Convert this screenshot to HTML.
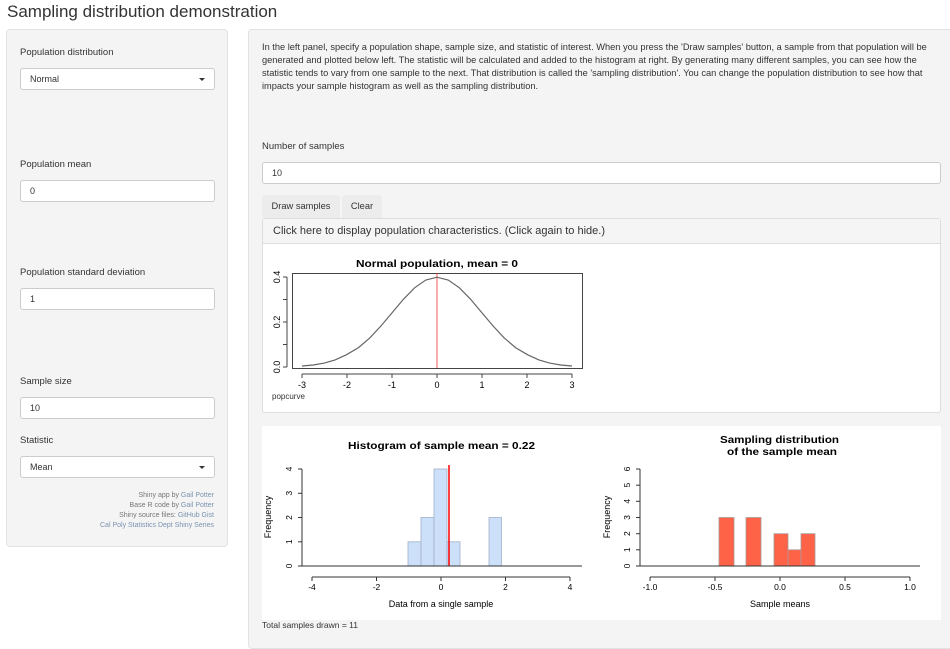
<!DOCTYPE html>
<html><head><meta charset="utf-8"><style>
*{box-sizing:border-box;margin:0;padding:0}
body{width:950px;height:636px;background:#fff;font-family:"Liberation Sans",Arial,sans-serif;color:#333;position:relative;overflow:hidden}
.a{position:absolute;white-space:nowrap}
.lbl{font-size:9.5px;color:#333}
.inp{position:absolute;background:#fff;border:1px solid #ccc;border-radius:3px;font-size:9px;padding-left:9px;line-height:20px;height:22px}
.car{position:absolute;right:9px;top:9px;width:0;height:0;border-left:3.5px solid transparent;border-right:3.5px solid transparent;border-top:3.5px solid #333}
.cred{font-size:7px;color:#777;text-align:right;right:736px;position:absolute}
.cred a{color:#7a93b0}
</style></head><body>
<div class="a" style="left:7px;top:2px;font-size:17px;color:#333">Sampling distribution demonstration</div>

<div class="a" style="left:6px;top:29px;width:222px;height:518px;background:#f4f4f4;border:1px solid #e3e3e3;border-radius:4px"></div>
<div class="a lbl" style="left:20px;top:47px">Population distribution</div>
<div class="inp" style="left:20px;top:68px;width:195px">Normal<div class="car"></div></div>
<div class="a lbl" style="left:20px;top:159px">Population mean</div>
<div class="inp" style="left:20px;top:180px;width:195px">0</div>
<div class="a lbl" style="left:20px;top:267px">Population standard deviation</div>
<div class="inp" style="left:20px;top:288px;width:195px">1</div>
<div class="a lbl" style="left:20px;top:376px">Sample size</div>
<div class="inp" style="left:20px;top:397px;width:195px">10</div>
<div class="a lbl" style="left:20px;top:435px">Statistic</div>
<div class="inp" style="left:20px;top:456px;width:195px">Mean<div class="car"></div></div>
<div class="cred" style="top:492px">Shiny app by <a>Gail Potter</a></div>
<div class="cred" style="top:502px">Base R code by <a>Gail Potter</a></div>
<div class="cred" style="top:512px">Shiny source files: <a>GitHub Gist</a></div>
<div class="cred" style="top:522px"><a>Cal Poly Statistics Dept Shiny Series</a></div>

<div class="a" style="left:248px;top:29px;width:710px;height:620px;background:#f4f4f4;border:1px solid #e3e3e3;border-radius:4px"></div>
<div class="a" style="left:262px;top:41px;font-size:9.25px;line-height:13px;color:#333">In the left panel, specify a population shape, sample size, and statistic of interest. When you press the 'Draw samples' button, a sample from that population will be<br>generated and plotted below left. The statistic will be calculated and added to the histogram at right. By generating many different samples, you can see how the<br>statistic tends to vary from one sample to the next. That distribution is called the 'sampling distribution'. You can change the population distribution to see how that<br>impacts your sample histogram as well as the sampling distribution.</div>
<div class="a lbl" style="left:262px;top:141px">Number of samples</div>
<div class="inp" style="left:262px;top:162px;width:679px">10</div>
<div class="a" style="left:262px;top:195px;width:78px;height:23px;background:#ececec;border-radius:3px 3px 0 0;font-size:9.3px;text-align:center;line-height:22px">Draw samples</div>
<div class="a" style="left:342px;top:195px;width:40px;height:23px;background:#ececec;border-radius:3px 3px 0 0;font-size:9.3px;text-align:center;line-height:22px">Clear</div>
<div class="a" style="left:262px;top:218px;width:679px;height:195px;background:#fff;border:1px solid #ddd;border-radius:3px"></div>
<div class="a" style="left:263px;top:219px;width:677px;height:25px;background:#f5f5f5;border-bottom:1px solid #ddd;font-size:11px;line-height:24px;padding-left:10px">Click here to display population characteristics. (Click again to hide.)</div>
<div class="a" style="left:262px;top:426px;width:679px;height:194px;background:#fff"></div>
<div class="a" style="left:262px;top:620px;font-size:8.5px;color:#333">Total samples drawn = 11</div>

<svg class="a" style="left:0;top:0" width="950" height="636" font-family="Liberation Sans,sans-serif">
<text x="356" y="267" font-size="10" font-weight="bold" fill="#000" textLength="162" lengthAdjust="spacingAndGlyphs">Normal population, mean = 0</text>
<rect x="292.5" y="273.5" width="290" height="95" fill="none" stroke="#444" stroke-width="1"/>
<line x1="437" y1="273" x2="437" y2="368" stroke="#e33" stroke-width="0.8"/>
<polyline fill="none" stroke="#666" stroke-width="1.2" points="302,366 313.2,365 324.4,363.1 335.1,359.9 346.3,354.8 358.5,347.6 369.8,337.9 381,325.9 392.2,312.6 403.4,299.3 414.6,287.8 425.8,280 437,277.2 448.2,280 459.4,287.8 470.6,299.3 481.8,312.6 493,325.9 504.2,337.9 515.5,347.6 527.7,354.8 538.9,359.9 549.6,363.1 560.8,365 572,366"/>
<g stroke="#444"><line x1="302" y1="374" x2="572" y2="374"/>
<line x1="302" y1="374" x2="302" y2="378"/><line x1="347" y1="374" x2="347" y2="378"/><line x1="392" y1="374" x2="392" y2="378"/><line x1="437" y1="374" x2="437" y2="378"/><line x1="482" y1="374" x2="482" y2="378"/><line x1="527" y1="374" x2="527" y2="378"/><line x1="572" y1="374" x2="572" y2="378"/>
<line x1="287" y1="277" x2="287" y2="367"/><line x1="283" y1="277" x2="287" y2="277"/><line x1="283" y1="299.5" x2="287" y2="299.5"/><line x1="283" y1="322" x2="287" y2="322"/><line x1="283" y1="344.5" x2="287" y2="344.5"/><line x1="283" y1="367" x2="287" y2="367"/></g>
<g font-size="9" text-anchor="middle" fill="#000"><text x="302" y="388">-3</text><text x="347" y="388">-2</text><text x="392" y="388">-1</text><text x="437" y="388">0</text><text x="482" y="388">1</text><text x="527" y="388">2</text><text x="572" y="388">3</text>
<text transform="translate(280,367) rotate(-90)">0.0</text><text transform="translate(280,322) rotate(-90)">0.2</text><text transform="translate(280,277) rotate(-90)">0.4</text></g>
<text x="272" y="399" font-size="8" fill="#333">popcurve</text>

<text x="348" y="449" font-size="10" font-weight="bold" fill="#000" textLength="187" lengthAdjust="spacingAndGlyphs">Histogram of sample mean = 0.22</text>
<g fill="#cce0fa" stroke="#9fb0c8" stroke-width="0.8">
<rect x="408" y="541.8" width="13" height="24.2"/><rect x="421" y="517.5" width="13" height="48.5"/><rect x="434" y="469" width="13" height="97"/><rect x="447" y="541.8" width="13" height="24.2"/><rect x="489" y="517.5" width="12.5" height="48.5"/></g>
<line x1="449" y1="465" x2="449" y2="566" stroke="#f00" stroke-width="1.5"/>
<line x1="302" y1="566" x2="582" y2="566" stroke="#333"/>
<g stroke="#333"><line x1="312" y1="577" x2="570" y2="577"/>
<line x1="312" y1="577" x2="312" y2="581"/><line x1="376.5" y1="577" x2="376.5" y2="581"/><line x1="441" y1="577" x2="441" y2="581"/><line x1="505.5" y1="577" x2="505.5" y2="581"/><line x1="570" y1="577" x2="570" y2="581"/>
<line x1="302" y1="469" x2="302" y2="566"/><line x1="298" y1="469" x2="302" y2="469"/><line x1="298" y1="493.3" x2="302" y2="493.3"/><line x1="298" y1="517.5" x2="302" y2="517.5"/><line x1="298" y1="541.8" x2="302" y2="541.8"/><line x1="298" y1="566" x2="302" y2="566"/></g>
<g font-size="8.5" text-anchor="middle" fill="#000"><text x="312" y="590">-4</text><text x="376.5" y="590">-2</text><text x="441" y="590">0</text><text x="505.5" y="590">2</text><text x="570" y="590">4</text>
<text transform="translate(292,566) rotate(-90)">0</text><text transform="translate(292,541.8) rotate(-90)">1</text><text transform="translate(292,517.5) rotate(-90)">2</text><text transform="translate(292,493.3) rotate(-90)">3</text><text transform="translate(292,469) rotate(-90)">4</text>
<text x="441" y="607" font-size="9">Data from a single sample</text>
<text transform="translate(271,517) rotate(-90)" font-size="9">Frequency</text></g>

<text x="720" y="443" font-size="10" font-weight="bold" fill="#000" textLength="119" lengthAdjust="spacingAndGlyphs">Sampling distribution</text>
<text x="727" y="455" font-size="10" font-weight="bold" fill="#000" textLength="110" lengthAdjust="spacingAndGlyphs">of the sample mean</text>
<g fill="#ff6347" stroke="#a99" stroke-width="0.8">
<rect x="719" y="517.5" width="15" height="48.5"/><rect x="746" y="517.5" width="15" height="48.5"/><rect x="774" y="533.7" width="14" height="32.3"/><rect x="788" y="549.8" width="13" height="16.2"/><rect x="801" y="533.7" width="14" height="32.3"/></g>
<line x1="640" y1="566" x2="920" y2="566" stroke="#333"/>
<g stroke="#333"><line x1="650" y1="577" x2="910" y2="577"/>
<line x1="650" y1="577" x2="650" y2="581"/><line x1="715" y1="577" x2="715" y2="581"/><line x1="780" y1="577" x2="780" y2="581"/><line x1="845" y1="577" x2="845" y2="581"/><line x1="910" y1="577" x2="910" y2="581"/>
<line x1="640" y1="469" x2="640" y2="566"/><line x1="636" y1="469" x2="640" y2="469"/><line x1="636" y1="485.2" x2="640" y2="485.2"/><line x1="636" y1="501.3" x2="640" y2="501.3"/><line x1="636" y1="517.5" x2="640" y2="517.5"/><line x1="636" y1="533.7" x2="640" y2="533.7"/><line x1="636" y1="549.8" x2="640" y2="549.8"/><line x1="636" y1="566" x2="640" y2="566"/></g>
<g font-size="8.5" text-anchor="middle" fill="#000"><text x="650" y="590">-1.0</text><text x="715" y="590">-0.5</text><text x="780" y="590">0.0</text><text x="845" y="590">0.5</text><text x="910" y="590">1.0</text>
<text transform="translate(630,566) rotate(-90)">0</text><text transform="translate(630,549.8) rotate(-90)">1</text><text transform="translate(630,533.7) rotate(-90)">2</text><text transform="translate(630,517.5) rotate(-90)">3</text><text transform="translate(630,501.3) rotate(-90)">4</text><text transform="translate(630,485.2) rotate(-90)">5</text><text transform="translate(630,469) rotate(-90)">6</text>
<text x="780" y="607" font-size="9">Sample means</text>
<text transform="translate(610,517) rotate(-90)" font-size="9">Frequency</text></g>
</svg>
</body></html>
